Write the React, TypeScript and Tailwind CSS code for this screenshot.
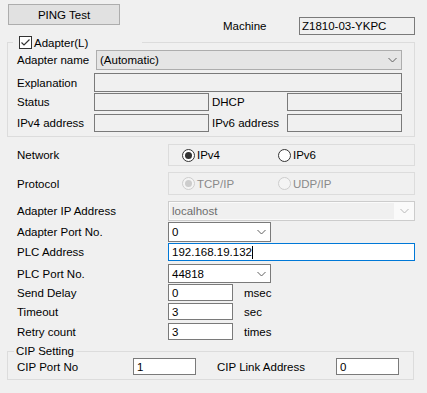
import React from "react";

const Chevron = ({ color = "#606060" }: { color?: string }) => (
  <svg width="9" height="6" viewBox="0 0 9 6" className="block">
    <path d="M0.5 1 L4.5 5 L8.5 1" fill="none" stroke={color} strokeWidth="1" />
  </svg>
);

const Radio = ({ checked, disabled }: { checked?: boolean; disabled?: boolean }) => (
  <svg width="13" height="13" viewBox="0 0 13 13" className="block shrink-0">
    <circle
      cx="6.5"
      cy="6.5"
      r="6"
      fill={disabled ? "#f4f4f4" : "#ffffff"}
      stroke={disabled ? "#cccccc" : "#333333"}
      strokeWidth="1"
    />
    {checked && <circle cx="6.5" cy="6.5" r="3.5" fill={disabled ? "#cccccc" : "#333333"} />}
  </svg>
);

const CheckBox = () => (
  <svg width="13" height="13" viewBox="0 0 13 13" className="block shrink-0">
    <rect x="0.5" y="0.5" width="12" height="12" fill="#ffffff" stroke="#333333" />
    <path d="M2.5 6.5 L5 9 L10.5 3.5" fill="none" stroke="#333333" strokeWidth="1.2" />
  </svg>
);

export default function App() {
  return (
    <div className="w-[427px] h-[393px] overflow-hidden bg-[#f0f0f0] text-black font-['Liberation_Sans',Arial,sans-serif] text-[11.5px] leading-[14px] flex flex-col">
      {/* top row */}
      <div className="flex items-start pt-[4px]">
        <div className="ml-[8px] w-[112px] h-[21px] box-border border border-[#adadad] bg-[#e1e1e1] flex items-center justify-center">
          PING Test
        </div>
        <div className="ml-[103px] mt-[13px] flex items-center">
          <span className="w-[76px]">Machine</span>
          <div className="w-[116px] h-[18px] box-border border border-[#7a7a7a] bg-[#f0f0f0] pl-[2px] flex items-center">
            Z1810-03-YKPC
          </div>
        </div>
      </div>

      {/* Adapter group */}
      <fieldset className="mt-[1px] ml-[7px] w-[408px] box-border border border-[#dcdcdc] pb-[4px]">
        <legend className="ml-[5px] w-[129px] h-[13px] flex items-center pl-[6px]">
          <CheckBox />
          <span className="ml-[2px]">Adapter(L)</span>
        </legend>
        <div className="mt-[1px] flex items-center pl-[9px]">
          <span className="w-[79px]">Adapter name</span>
          <div className="w-[306px] h-[20px] box-border border border-[#adadad] bg-[#e5e5e5] flex items-center pl-[3px] pr-[4px]">
            <span className="flex-1">(Automatic)</span>
            <Chevron />
          </div>
        </div>
        <div className="mt-[3px] flex items-center pl-[9px]">
          <span className="w-[77px]">Explanation</span>
          <div className="w-[308px] h-[19px] box-border border border-[#7a7a7a] bg-[#f0f0f0]" />
        </div>
        <div className="mt-[1px] flex items-center pl-[9px]">
          <span className="w-[77px]">Status</span>
          <div className="w-[115px] h-[18px] box-border border border-[#7a7a7a] bg-[#f0f0f0]" />
          <span className="ml-[3px] w-[75px]">DHCP</span>
          <div className="w-[115px] h-[18px] box-border border border-[#7a7a7a] bg-[#f0f0f0]" />
        </div>
        <div className="mt-[3px] flex items-center pl-[9px]">
          <span className="w-[77px]">IPv4 address</span>
          <div className="w-[115px] h-[18px] box-border border border-[#7a7a7a] bg-[#f0f0f0]" />
          <span className="ml-[3px] w-[75px]">IPv6 address</span>
          <div className="w-[115px] h-[18px] box-border border border-[#7a7a7a] bg-[#f0f0f0]" />
        </div>
      </fieldset>

      {/* Network */}
      <div className="mt-[7px] flex items-center pl-[17px]">
        <span className="w-[151px]">Network</span>
        <div className="w-[247px] h-[22px] box-border border border-[#dcdcdc] flex items-center pl-[13px]">
          <div className="w-[96px] flex items-center">
            <Radio checked />
            <span className="ml-[2px]">IPv4</span>
          </div>
          <div className="flex items-center">
            <Radio />
            <span className="ml-[2px]">IPv6</span>
          </div>
        </div>
      </div>

      {/* Protocol */}
      <div className="mt-[6px] flex items-center pl-[17px]">
        <span className="w-[151px]">Protocol</span>
        <div className="w-[247px] h-[23px] box-border border border-[#dcdcdc] flex items-center pl-[13px] text-[#8a8a8a]">
          <div className="w-[96px] flex items-center">
            <Radio checked disabled />
            <span className="ml-[2px]">TCP/IP</span>
          </div>
          <div className="flex items-center">
            <Radio disabled />
            <span className="ml-[2px]">UDP/IP</span>
          </div>
        </div>
      </div>

      {/* Adapter IP Address */}
      <div className="mt-[6px] flex items-center pl-[17px]">
        <span className="w-[151px]">Adapter IP Address</span>
        <div className="w-[247px] h-[20px] box-border border border-[#cccccc] bg-[#fafafa] flex items-stretch">
          <div className="flex-1 m-[1px] bg-[#f0f0f0] flex items-center pl-[2px] text-[#6d6d6d]">localhost</div>
          <div className="w-[19px] flex items-center justify-center">
            <Chevron color="#b8b8b8" />
          </div>
        </div>
      </div>

      {/* Adapter Port No. */}
      <div className="mt-[1px] flex items-center pl-[17px]">
        <span className="w-[151px]">Adapter Port No.</span>
        <div className="w-[103px] h-[20px] box-border border border-[#7a7a7a] bg-white flex items-center pl-[3px] pr-[4px]">
          <span className="flex-1">0</span>
          <Chevron />
        </div>
      </div>

      {/* PLC Address */}
      <div className="mt-[1px] flex items-center pl-[17px]">
        <span className="w-[151px]">PLC Address</span>
        <div className="w-[247px] h-[18px] box-border border border-[#0078d7] bg-white flex items-center pl-[3px]">
          <span>192.168.19.132</span>
          <span className="w-[1px] h-[13px] bg-black" />
        </div>
      </div>

      {/* PLC Port No. */}
      <div className="mt-[3px] flex items-center pl-[17px]">
        <span className="w-[151px]">PLC Port No.</span>
        <div className="w-[103px] h-[19px] box-border border border-[#7a7a7a] bg-white flex items-center pl-[3px] pr-[4px]">
          <span className="flex-1">44818</span>
          <Chevron />
        </div>
      </div>

      {/* Send Delay */}
      <div className="mt-[1px] flex items-center pl-[17px]">
        <span className="w-[151px]">Send Delay</span>
        <div className="w-[65px] h-[17px] box-border border border-[#7a7a7a] bg-white flex items-center pl-[3px]">0</div>
        <span className="ml-[11px]">msec</span>
      </div>

      {/* Timeout */}
      <div className="mt-[2px] flex items-center pl-[17px]">
        <span className="w-[151px]">Timeout</span>
        <div className="w-[65px] h-[17px] box-border border border-[#7a7a7a] bg-white flex items-center pl-[3px]">3</div>
        <span className="ml-[11px]">sec</span>
      </div>

      {/* Retry count */}
      <div className="mt-[3px] flex items-center pl-[17px]">
        <span className="w-[151px]">Retry count</span>
        <div className="w-[65px] h-[17px] box-border border border-[#7a7a7a] bg-white flex items-center pl-[3px]">3</div>
        <span className="ml-[11px]">times</span>
      </div>

      {/* CIP Setting */}
      <fieldset className="mt-[4px] ml-[7px] w-[407px] box-border border border-[#dcdcdc] pb-[4px]">
        <legend className="ml-[6px] px-[2px] h-[14px]">CIP Setting</legend>
        <div className="flex items-center pl-[9px]">
          <span className="w-[116px]">CIP Port No</span>
          <div className="w-[63px] h-[17px] box-border border border-[#7a7a7a] bg-white flex items-center pl-[3px]">1</div>
          <span className="ml-[21px] w-[119px]">CIP Link Address</span>
          <div className="w-[63px] h-[17px] box-border border border-[#7a7a7a] bg-white flex items-center pl-[3px]">0</div>
        </div>
      </fieldset>
    </div>
  );
}
